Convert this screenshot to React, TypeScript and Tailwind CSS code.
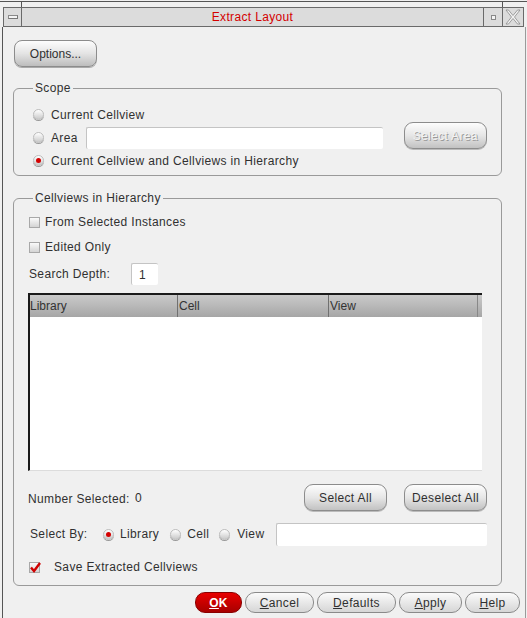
import React from 'react';

const Radio: React.FC<{ on?: boolean }> = ({ on }) => (
  <span className="w-[11px] h-[11px] shrink-0 rounded-full border border-[#bdbdbd] bg-linear-to-b from-white to-[#cacaca] flex items-center justify-center shadow-[0_1px_0_#999]">
    {on && <span className="w-[5px] h-[5px] rounded-full bg-[#d40000]" />}
  </span>
);

const Check: React.FC<{ on?: boolean }> = ({ on }) => (
  <span className="relative w-[11px] h-[11px] shrink-0 border border-[#a8a8a8] bg-linear-to-b from-[#fafafa] to-[#d4d4d4]">
    {on && (
      <svg className="absolute -left-px -top-[2px]" width="13" height="13" viewBox="0 0 13 13">
        <path d="M2 6.5 L5 10 L11 2" fill="none" stroke="#d00000" strokeWidth="2.4" />
      </svg>
    )}
  </span>
);

const PillButton: React.FC<{ w: string; children: React.ReactNode; disabled?: boolean }> = ({ w, children, disabled }) => (
  <div
    className={
      'h-[27px] rounded-[9px] border border-[#8c8c8c] bg-linear-to-b from-[#fdfdfd] via-[#e6e6e6] to-[#c2c2c2] flex items-center justify-center text-[12px] shadow-[0_1px_0_#bbb] ' +
      w +
      (disabled ? ' text-[#f2f2f2] [text-shadow:1px_1px_0_#9a9a9a]' : ' text-[#303030]')
    }
  >
    {children}
  </div>
);

const FootButton: React.FC<{ w: string; u: string; rest: string }> = ({ w, u, rest }) => (
  <div className={'h-[21px] rounded-[10px] border border-[#8a8a8a] bg-linear-to-b from-[#fbfbfb] to-[#d6d6d6] flex items-center justify-center text-[12px] text-[#303030] ' + w}>
    <span className="underline">{u}</span>
    {rest}
  </div>
);

const App: React.FC = () => {
  return (
    <div className="w-[527px] h-[618px] bg-[#f0f0f0] overflow-hidden flex flex-col font-['Liberation_Sans',Arial,sans-serif] text-[#303030] leading-[14px] tracking-[0.35px]">
      {/* frame top strip */}
      <div className="mt-px h-[6px] flex border-t border-[#555]">
        <div className="w-[22px] border-r border-[#555]" />
        <div className="w-[481px] border-r border-[#555]" />
      </div>

      {/* title bar */}
      <div className="ml-[3px] w-[521px] h-[20px] flex border border-[#6a6a6a] bg-[#dcdcdc]">
        <div className="w-[18px] border-r border-[#6a6a6a] flex items-center justify-center">
          <span className="w-[10px] h-[4px] border border-[#8a8a8a] bg-[#f4f4f4] border-r-[#777] border-b-[#777]" />
        </div>
        <div className="flex-1 flex items-center justify-center text-[12px] text-[#d40000]">Extract Layout</div>
        <div className="w-[19px] border-l border-[#6a6a6a] flex items-center justify-center">
          <span className="w-[5px] h-[5px] border border-[#888] bg-[#f4f4f4]" />
        </div>
        <div className="w-[21px] border-l border-[#6a6a6a] flex items-center justify-center">
          <svg width="16" height="16" viewBox="0 0 16 16">
            <path d="M1 1 L6.5 8 L1 15 H3.5 L8 9.5 L12.5 15 H15 L9.5 8 L15 1 H12.5 L8 6.5 L3.5 1 Z" fill="#f2f2f2" stroke="#8a8a8a" strokeWidth="0.8" />
          </svg>
        </div>
      </div>

      {/* body */}
      <div className="flex flex-1">
        <div className="w-[3px] border-r border-[#555]" />
        <div className="w-[522px] flex flex-col">
          <div className="ml-[11px] mt-[13px]">
            <div className="w-[83px] h-[27px] rounded-[8px] border border-[#8c8c8c] bg-linear-to-b from-[#fdfdfd] via-[#e4e4e4] to-[#bdbdbd] flex items-center justify-center text-[12px] tracking-normal shadow-[0_1px_0_#aaa]">
              Options...
            </div>
          </div>

          {/* Scope */}
          <fieldset className="ml-[10px] mt-[14px] w-[489px] h-[95px] border border-[#9a9a9a] rounded-[6px] p-0">
            <legend className="ml-[19px] px-[2px] text-[12px]">Scope</legend>
            <div className="flex flex-col pl-[19px] mt-[8px]">
              <div className="h-[23px] flex items-center gap-[7px]">
                <Radio />
                <span className="text-[12px]">Current Cellview</span>
              </div>
              <div className="h-[23px] flex items-center">
                <Radio />
                <span className="text-[12px] ml-[7px]">Area</span>
                <div className="ml-[8px] w-[297px] h-[22px] bg-white border-t border-l border-[#c4c4c4] rounded-[2px]" />
                <div className="ml-[21px] mb-[4px]">
                  <PillButton w="w-[83px]" disabled>
                    Select Area
                  </PillButton>
                </div>
              </div>
              <div className="h-[23px] flex items-center gap-[7px]">
                <Radio on />
                <span className="text-[12px]">Current Cellview and Cellviews in Hierarchy</span>
              </div>
            </div>
          </fieldset>

          {/* Cellviews in Hierarchy */}
          <fieldset className="ml-[10px] mt-[15px] w-[489px] h-[395px] border border-[#9a9a9a] rounded-[6px] p-0">
            <legend className="ml-[19px] px-[2px] text-[12px]">Cellviews in Hierarchy</legend>
            <div className="flex flex-col pl-[15px] mt-[7px]">
              <div className="h-[20px] flex items-center gap-[5px]">
                <Check />
                <span className="text-[12px]">From Selected Instances</span>
              </div>
              <div className="h-[20px] mt-[5px] flex items-center gap-[5px]">
                <Check />
                <span className="text-[12px]">Edited Only</span>
              </div>
              <div className="h-[22px] mt-[6px] flex items-center">
                <span className="text-[12px] w-[102px]">Search Depth:</span>
                <div className="w-[27px] h-[22px] bg-white border-t border-l border-[#c4c4c4] rounded-[2px] text-[12px] pl-[7px] flex items-center">1</div>
              </div>

              {/* table */}
              <div className="mt-[8px] -ml-px w-[454px] h-[178px] flex flex-col border-t-2 border-l-2 border-[#1a1a1a] bg-white border-b border-b-[#dcdcdc]">
                <div className="h-[22px] flex bg-linear-to-b from-[#cacaca] to-[#a6a6a6] text-[12px] text-[#333] tracking-normal">
                  <div className="w-[148px] flex items-center border-r border-[#707070]">Library</div>
                  <div className="w-[151px] flex items-center pl-px border-r border-[#707070]">Cell</div>
                  <div className="w-[149px] flex items-center pl-px border-r border-[#888]">View</div>
                </div>
                <div className="flex-1" />
              </div>

              <div className="h-[27px] mt-[13px] flex items-center">
                <span className="text-[12px] -ml-px mt-[2px] w-[107px]">Number Selected:</span>
                <span className="text-[12px]">0</span>
                <div className="ml-auto mr-[14px] flex gap-[17px]">
                  <PillButton w="w-[83px]">Select All</PillButton>
                  <PillButton w="w-[83px]">Deselect All</PillButton>
                </div>
              </div>

              <div className="h-[23px] mt-[12px] flex items-center">
                <span className="text-[12px] ml-px mb-[2px] w-[73px]">Select By:</span>
                <Radio on />
                <span className="text-[12px] ml-[6px] mb-[2px]">Library</span>
                <span className="ml-[11px]">
                  <Radio />
                </span>
                <span className="text-[12px] ml-[6px] mb-[2px]">Cell</span>
                <span className="ml-[10px]">
                  <Radio />
                </span>
                <span className="text-[12px] ml-[7px] mb-[2px]">View</span>
                <div className="ml-[12px] w-[211px] h-[23px] bg-white border-t border-l border-[#c4c4c4] rounded-[2px]" />
              </div>

              <div className="h-[20px] mt-[11px] flex items-center">
                <Check on />
                <span className="text-[12px] ml-[14px]">Save Extracted Cellviews</span>
              </div>
            </div>
          </fieldset>

          {/* footer buttons */}
          <div className="mt-[6px] mr-[5px] flex justify-end gap-[3px]">
            <div className="w-[47px] h-[21px] rounded-[10px] border border-[#8a0000] bg-linear-to-b from-[#e80000] to-[#a80000] flex items-center justify-center text-[12px] font-bold text-white">
              <span className="underline">O</span>K
            </div>
            <FootButton w="w-[69px]" u="C" rest="ancel" />
            <FootButton w="w-[79px]" u="D" rest="efaults" />
            <FootButton w="w-[63px]" u="A" rest="pply" />
            <FootButton w="w-[55px]" u="H" rest="elp" />
          </div>
        </div>
        <div className="w-px bg-[#9a9a9a]" />
      </div>
    </div>
  );
};

export default App;
